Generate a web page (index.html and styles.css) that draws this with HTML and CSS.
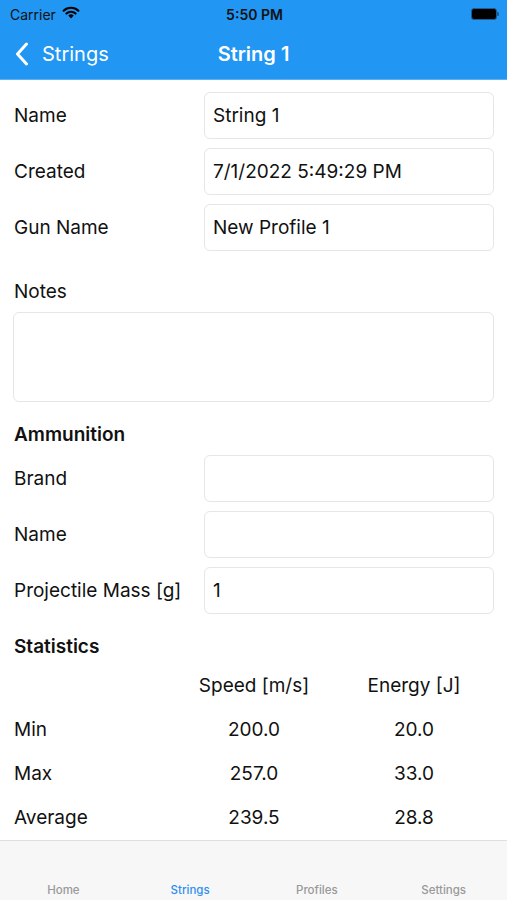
FILE: index.html
```html
<!DOCTYPE html>
<html lang="en">
<head>
  <meta charset="UTF-8">
  <meta name="viewport" content="width=device-width, initial-scale=1.0">
  <link rel="stylesheet" href="styles.css">
  <title>String 1</title>
</head>
<body>
  <div class="header">
    <div class="status">
      <div class="carrier">Carrier
        <svg class="wifi" width="18" height="13" viewBox="0 0 18 13">
          <path d="M9 12.5 L6.3 9.6 A3.8 3.8 0 0 1 11.7 9.6 Z" fill="#000"/>
          <path d="M4.4 7.6 A6.6 6.6 0 0 1 13.6 7.6" stroke="#000" stroke-width="2.1" fill="none" stroke-linecap="round"/>
          <path d="M1.6 4.7 A10.6 10.6 0 0 1 16.4 4.7" stroke="#000" stroke-width="2.1" fill="none" stroke-linecap="round"/>
        </svg>
      </div>
      <div class="time">5:50 PM</div>
      <div class="battery"><div class="battery-fill"></div><div class="battery-tip"></div></div>
    </div>
    <div class="navbar">
      <div class="back">
        <svg width="14" height="24" viewBox="0 0 14 24"><path d="M11.5 2 L2.5 12 L11.5 22" stroke="#fff" stroke-width="3" fill="none" stroke-linecap="round" stroke-linejoin="round"/></svg>
        <span>Strings</span>
      </div>
      <div class="nav-title">String 1</div>
    </div>
  </div>

  <div class="content">
    <div class="row"><p>Name</p><div class="field">String 1</div></div>
    <div class="row"><p>Created</p><div class="field">7/1/2022 5:49:29 PM</div></div>
    <div class="row"><p>Gun Name</p><div class="field">New Profile 1</div></div>

    <p class="notes-label">Notes</p>
    <div class="notes"></div>

    <h2 class="section">Ammunition</h2>
    <div class="row first"><p>Brand</p><div class="field"></div></div>
    <div class="row"><p>Name</p><div class="field"></div></div>
    <div class="row"><p>Projectile Mass [g]</p><div class="field">1</div></div>

    <h2 class="section">Statistics</h2>
    <div class="stats">
      <span></span><span class="c">Speed [m/s]</span><span class="c">Energy [J]</span>
      <span>Min</span><span class="c">200.0</span><span class="c">20.0</span>
      <span>Max</span><span class="c">257.0</span><span class="c">33.0</span>
      <span>Average</span><span class="c">239.5</span><span class="c">28.8</span>
    </div>
  </div>

  <div class="tabbar">
    <div class="tab">Home</div>
    <div class="tab active">Strings</div>
    <div class="tab">Profiles</div>
    <div class="tab">Settings</div>
  </div>
</body>
</html>
```

FILE: styles.css
```css
  body {
    margin: 0;
    width: 507px;
    height: 900px;
    display: flex;
    flex-direction: column;
    background-color: #fff;
    font-family: "Inter", "Liberation Sans", sans-serif;
    color: #111;
    overflow: hidden;
  }

  .header {
    background-color: #2196f3;
    height: 79px;
    border-bottom: 1px solid #5fb0f0;
  }

  .status {
    display: flex;
    justify-content: space-between;
    align-items: center;
    height: 28px;
    padding: 0 8px 0 10px;
    font-size: 14px;
  }

  .carrier {
    display: flex;
    align-items: center;
    gap: 6px;
    width: 120px;
    color: #111;
  }

  .wifi {
    margin-top: -3px;
  }

  .time {
    font-weight: 600;
    color: #111;
  }

  .battery {
    width: 120px;
    display: flex;
    justify-content: flex-end;
    align-items: center;
  }

  .battery-fill {
    width: 24px;
    height: 10px;
    background-color: #000;
    border-radius: 3px;
    border: 1px solid #1a5e95;
  }

  .battery-tip {
    width: 2px;
    height: 4px;
    background-color: #1a5e95;
    border-radius: 0 1px 1px 0;
  }

  .navbar {
    display: flex;
    align-items: center;
    height: 51px;
    position: relative;
  }

  .back {
    display: flex;
    align-items: center;
    gap: 13px;
    padding-left: 15px;
    color: #fff;
    font-size: 20px;
  }

  .nav-title {
    position: absolute;
    left: 0;
    right: 0;
    text-align: center;
    color: #fff;
    font-size: 20px;
    font-weight: 600;
    pointer-events: none;
  }

  .content {
    flex: 1;
    padding: 12px 13px 0 14px;
  }

  .row {
    display: grid;
    grid-template-columns: 190px 1fr;
    align-items: center;
    margin-bottom: 9px;
  }

  .row p {
    margin: 0;
    font-size: 19px;
  }

  .field {
    height: 47px;
    box-sizing: border-box;
    border: 1px solid #e6e6e6;
    border-radius: 6px;
    padding: 0 8px;
    display: flex;
    align-items: center;
    font-size: 19px;
  }

  .notes-label {
    margin: 29px 0 8px 0;
    font-size: 19px;
    line-height: 24px;
  }

  .notes {
    height: 90px;
    margin-left: -1px;
    box-sizing: border-box;
    border: 1px solid #e6e6e6;
    border-radius: 6px;
  }

  .section {
    margin: 21px 0 8px 0;
    font-size: 19px;
    line-height: 24px;
    font-weight: 600;
  }

  .stats {
    display: grid;
    grid-template-columns: 1fr 1fr 1fr;
    grid-auto-rows: 44px;
    align-items: center;
    margin-top: -4px;
    font-size: 19px;
  }

  .stats .c {
    text-align: center;
  }

  .tabbar {
    height: 59px;
    border-top: 1px solid #e0e0e0;
    background-color: #f7f7f7;
    display: grid;
    grid-template-columns: repeat(4, 1fr);
    align-items: end;
  }

  .tab {
    text-align: center;
    font-size: 11.5px;
    font-weight: 500;
    color: #999;
    padding-bottom: 3px;
  }

  .tab.active {
    color: #2f8ff0;
  }
```
